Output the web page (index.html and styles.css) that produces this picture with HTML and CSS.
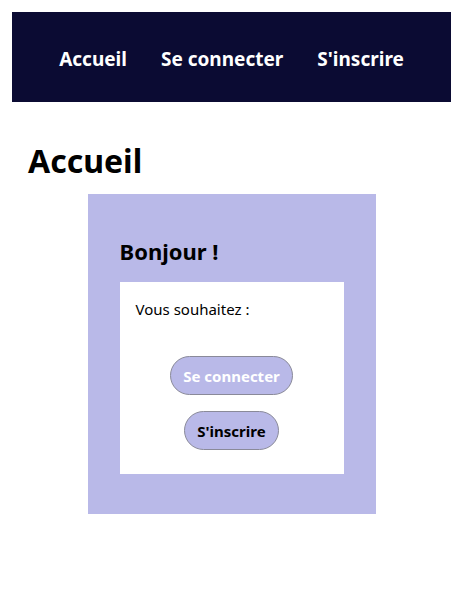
FILE: index.html
```html
<!DOCTYPE html>
<html lang="fr">
<head>
<meta charset="utf-8">
<title>Accueil</title>
<link rel="stylesheet" href="styles.css">
</head>
<body>
<nav class="nav">
  <a class="nav-link" href="#">Accueil</a>
  <a class="nav-link" href="#">Se connecter</a>
  <a class="nav-link" href="#">S'inscrire</a>
</nav>
<main class="main">
  <h1 class="title">Accueil</h1>
  <section class="card">
    <h2 class="card-title">Bonjour !</h2>
    <div class="panel">
      <p class="panel-text">Vous souhaitez :</p>
      <div class="actions">
        <button class="btn btn-light" type="button">Se connecter</button>
        <button class="btn btn-dark" type="button">S'inscrire</button>
      </div>
    </div>
  </section>
</main>
</body>
</html>
```

FILE: styles.css
```css
* { box-sizing: border-box; }
body {
  margin: 12px;
  font-family: "Noto Sans", "Open Sans", sans-serif;
  color: #000;
  background: #fff;
}
.nav {
  height: 90px;
  padding-top: 4px;
  background: #0b0b33;
  display: flex;
  justify-content: center;
  align-items: center;
  gap: 34px;
}
.nav-link {
  color: #fff;
  text-decoration: none;
  font-weight: 700;
  font-size: 19px;
  line-height: 24px;
}
.main {
  padding: 0 16px;
}
.title {
  margin: 36px 0 0;
  font-size: 32px;
  line-height: 46px;
  font-weight: 700;
}
.card {
  width: 288px;
  margin: 10px auto 0;
  background: #b9b9e8;
  padding: 42px 32px 40px;
}
.card-title {
  margin: 0 0 16px;
  font-size: 22px;
  line-height: 30px;
  font-weight: 700;
}
.panel {
  background: #fff;
  padding: 16px 16px 24px;
}
.panel-text {
  margin: 0;
  font-size: 15px;
  line-height: 22px;
}
.actions {
  margin-top: 36px;
  display: flex;
  flex-direction: column;
  align-items: center;
  gap: 16px;
}
.btn {
  height: 39px;
  padding: 0 12px;
  border: 1px solid #8a8a99;
  border-radius: 20px;
  background: #b9b9e8;
  font-family: inherit;
  font-size: 15px;
  font-weight: 700;
}
.btn-light { color: #fff; }
.btn-dark { color: #000; }
```
